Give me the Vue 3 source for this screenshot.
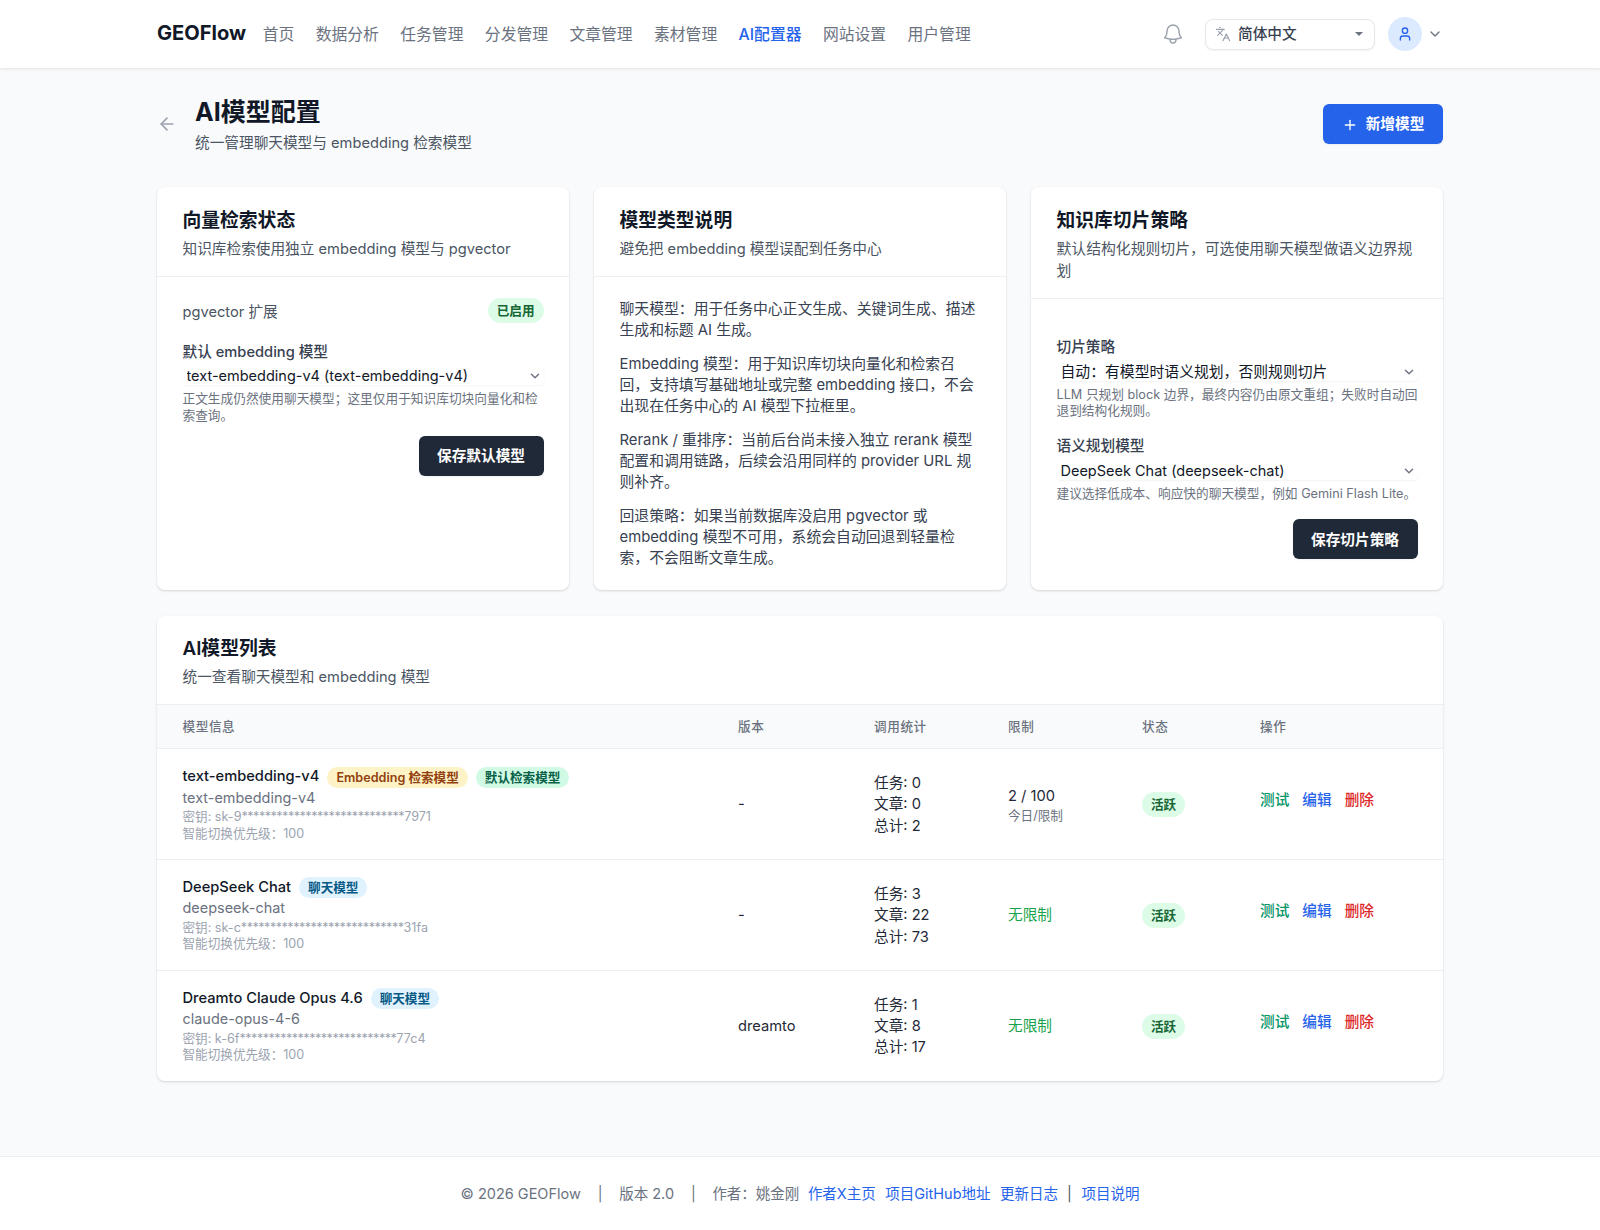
<script setup>
const navItems = ['首页', '数据分析', '任务管理', '分发管理', '文章管理', '素材管理', 'AI配置器', '网站设置', '用户管理']

const typeNotes = [
  '聊天模型：用于任务中心正文生成、关键词生成、描述生成和标题 AI 生成。',
  'Embedding 模型：用于知识库切块向量化和检索召回，支持填写基础地址或完整 embedding 接口，不会出现在任务中心的 AI 模型下拉框里。',
  'Rerank / 重排序：当前后台尚未接入独立 rerank 模型配置和调用链路，后续会沿用同样的 provider URL 规则补齐。',
  '回退策略：如果当前数据库没启用 pgvector 或 embedding 模型不可用，系统会自动回退到轻量检索，不会阻断文章生成。'
]

const models = [
  {
    name: 'text-embedding-v4',
    tags: [
      { text: 'Embedding 检索模型', kind: 'amber' },
      { text: '默认检索模型', kind: 'mint' }
    ],
    modelId: 'text-embedding-v4',
    key: ['sk-9', 28, '7971'],
    version: '-',
    stats: [0, 0, 2],
    limit: '2 / 100'
  },
  {
    name: 'DeepSeek Chat',
    tags: [{ text: '聊天模型', kind: 'sky' }],
    modelId: 'deepseek-chat',
    key: ['sk-c', 28, '31fa'],
    version: '-',
    stats: [3, 22, 73],
    limit: null
  },
  {
    name: 'Dreamto Claude Opus 4.6',
    tags: [{ text: '聊天模型', kind: 'sky' }],
    modelId: 'claude-opus-4-6',
    key: ['k-6f', 27, '77c4'],
    version: 'dreamto',
    stats: [1, 8, 17],
    limit: null
  }
]
</script>

<template>
  <div class="page">
    <header class="topbar">
      <div class="topbar-inner">
        <span class="logo">GEOFlow</span>
        <nav class="nav">
          <a v-for="item in navItems" :key="item" :class="{ active: item === 'AI配置器' }">{{ item }}</a>
        </nav>
        <div class="topbar-right">
          <svg class="bell" viewBox="0 0 24 24" fill="none" stroke="currentColor" stroke-width="1.5" stroke-linecap="round" stroke-linejoin="round">
            <path d="M14.857 17.082a23.848 23.848 0 0 0 5.454-1.31A8.967 8.967 0 0 1 18 9.75V9A6 6 0 0 0 6 9v.75a8.967 8.967 0 0 1-2.312 6.022c1.733.64 3.56 1.085 5.455 1.31m5.714 0a24.255 24.255 0 0 1-5.714 0m5.714 0a3 3 0 1 1-5.714 0" />
          </svg>
          <div class="lang">
            <svg class="lang-icon" viewBox="0 0 24 24" fill="none" stroke="currentColor" stroke-width="1.8" stroke-linecap="round" stroke-linejoin="round">
              <path d="m5 8 6 6" /><path d="m4 14 6-6 2-3" /><path d="M2 5h12" /><path d="M7 2h1" /><path d="m22 22-5-10-5 10" /><path d="M14 18h6" />
            </svg>
            <span class="lang-text">简体中文</span>
            <span class="caret"></span>
          </div>
          <div class="avatar">
            <svg viewBox="0 0 24 24" fill="none" stroke="currentColor" stroke-width="2" stroke-linecap="round" stroke-linejoin="round">
              <path d="M19 21v-2a4 4 0 0 0-4-4H9a4 4 0 0 0-4 4v2" /><circle cx="12" cy="7" r="4" />
            </svg>
          </div>
          <svg class="user-chevron" viewBox="0 0 24 24" fill="none" stroke="currentColor" stroke-width="2" stroke-linecap="round" stroke-linejoin="round">
            <path d="m6 9 6 6 6-6" />
          </svg>
        </div>
      </div>
    </header>

    <main class="main">
      <section class="page-head">
        <svg class="back" viewBox="0 0 24 24" fill="none" stroke="currentColor" stroke-width="2" stroke-linecap="round" stroke-linejoin="round">
          <path d="M19 12H5" /><path d="m12 19-7-7 7-7" />
        </svg>
        <div class="page-titles">
          <h1>AI模型配置</h1>
          <p>统一管理聊天模型与 embedding 检索模型</p>
        </div>
        <button class="btn-primary">
          <svg viewBox="0 0 24 24" fill="none" stroke="currentColor" stroke-width="2" stroke-linecap="round">
            <path d="M12 5v14" /><path d="M5 12h14" />
          </svg>
          新增模型
        </button>
      </section>

      <section class="cards">
        <div class="card">
          <div class="card-head">
            <h2>向量检索状态</h2>
            <p>知识库检索使用独立 embedding 模型与 pgvector</p>
          </div>
          <div class="card-body default-model">
            <div class="status-row">
              <span class="status-name">pgvector 扩展</span>
              <span class="badge-green">已启用</span>
            </div>
            <label class="field-label">默认 embedding 模型</label>
            <div class="select-wrap first-select">
              <select class="select latin">
                <option>text-embedding-v4 (text-embedding-v4)</option>
              </select>
              <svg viewBox="0 0 20 20" fill="none" stroke="#6b7280" stroke-width="1.5" stroke-linecap="round" stroke-linejoin="round"><path d="m6 8 4 4 4-4" /></svg>
            </div>
            <p class="help">正文生成仍然使用聊天模型；这里仅用于知识库切块向量化和检索查询。</p>
            <div class="actions">
              <button class="btn-dark">保存默认模型</button>
            </div>
          </div>
        </div>

        <div class="card">
          <div class="card-head">
            <h2>模型类型说明</h2>
            <p>避免把 embedding 模型误配到任务中心</p>
          </div>
          <div class="card-body notes">
            <p v-for="note in typeNotes" :key="note">{{ note }}</p>
          </div>
        </div>

        <div class="card">
          <div class="card-head">
            <h2>知识库切片策略</h2>
            <p class="cjk">默认结构化规则切片，可选使用聊天模型做语义边界规划</p>
          </div>
          <div class="card-body strategy">
            <label class="field-label">切片策略</label>
            <div class="select-wrap">
              <select class="select cjk">
                <option>自动：有模型时语义规划，否则规则切片</option>
              </select>
              <svg viewBox="0 0 20 20" fill="none" stroke="#6b7280" stroke-width="1.5" stroke-linecap="round" stroke-linejoin="round"><path d="m6 8 4 4 4-4" /></svg>
            </div>
            <p class="help">LLM 只规划 block 边界，最终内容仍由原文重组；失败时自动回退到结构化规则。</p>
            <label class="field-label second">语义规划模型</label>
            <div class="select-wrap">
              <select class="select latin">
                <option>DeepSeek Chat (deepseek-chat)</option>
              </select>
              <svg viewBox="0 0 20 20" fill="none" stroke="#6b7280" stroke-width="1.5" stroke-linecap="round" stroke-linejoin="round"><path d="m6 8 4 4 4-4" /></svg>
            </div>
            <p class="help">建议选择低成本、响应快的聊天模型，例如 Gemini Flash Lite。</p>
            <div class="actions">
              <button class="btn-dark">保存切片策略</button>
            </div>
          </div>
        </div>
      </section>

      <section class="card list-card">
        <div class="list-head">
          <h2>AI模型列表</h2>
          <p>统一查看聊天模型和 embedding 模型</p>
        </div>
        <table class="table">
          <colgroup>
            <col class="col-info" /><col class="col-version" /><col class="col-stats" />
            <col class="col-limit" /><col class="col-status" /><col />
          </colgroup>
          <thead>
            <tr>
              <th>模型信息</th><th>版本</th><th>调用统计</th><th>限制</th><th>状态</th><th>操作</th>
            </tr>
          </thead>
          <tbody>
            <tr v-for="m in models" :key="m.name">
              <td class="cell-info">
                <div class="model-name">
                  <span>{{ m.name }}</span>
                  <span v-for="t in m.tags" :key="t.text" class="tag" :class="t.kind">{{ t.text }}</span>
                </div>
                <div class="model-id">{{ m.modelId }}</div>
                <div class="model-meta key">密钥: {{ m.key[0] }}<span class="stars">{{ '*'.repeat(m.key[1]) }}</span>{{ m.key[2] }}</div>
                <div class="model-meta">智能切换优先级：100</div>
              </td>
              <td class="cell-text">{{ m.version }}</td>
              <td class="cell-text">
                <div>任务: {{ m.stats[0] }}</div>
                <div>文章: {{ m.stats[1] }}</div>
                <div>总计: {{ m.stats[2] }}</div>
              </td>
              <td class="cell-text">
                <template v-if="m.limit">
                  <div>{{ m.limit }}</div>
                  <div class="limit-sub">今日/限制</div>
                </template>
                <span v-else class="unlimited">无限制</span>
              </td>
              <td><span class="badge-green status-badge">活跃</span></td>
              <td>
                <div class="ops">
                  <a class="op-test">测试</a>
                  <a class="op-edit">编辑</a>
                  <a class="op-del">删除</a>
                </div>
              </td>
            </tr>
          </tbody>
        </table>
      </section>
    </main>

    <footer class="footer">
      <span>© 2026 GEOFlow</span>
      <span class="sep">|</span>
      <span>版本 2.0</span>
      <span class="sep">|</span>
      <span>作者：姚金刚</span>
      <a class="first-link">作者X主页</a>
      <a>项目GitHub地址</a>
      <a>更新日志</a>
      <span class="sep-tight">|</span>
      <a>项目说明</a>
    </footer>
  </div>
</template>

<style>
html,
body {
  margin: 0;
  background: #f9fafb;
}
</style>

<style scoped>
.page {
  min-height: 1230px;
  display: flex;
  flex-direction: column;
  font-family: Inter, "Noto Sans CJK SC", sans-serif;
  font-size: 14.66px;
  line-height: 21.4px;
  color: #1f2937;
  background: #f9fafb;
}

h1,
h2,
p {
  margin: 0;
}

.topbar {
  height: 68px;
  background: #fff;
  box-shadow: 0 1px 3px rgba(0, 0, 0, 0.1);
  position: relative;
}

.topbar-inner {
  height: 100%;
  margin: 0 157px;
  display: flex;
  align-items: center;
}

.logo {
  font-size: 20.1px;
  font-weight: 700;
  color: #111827;
}

.nav {
  display: flex;
  gap: 21.4px;
  margin-left: 16.5px;
  padding-top: 1px;
  font-size: 15.8px;
  color: #6b7280;
}

.nav .active {
  color: #2563eb;
  font-weight: 500;
}

.topbar-right {
  margin-left: auto;
  display: flex;
  align-items: center;
}

.bell {
  width: 24px;
  height: 24px;
  color: #9ca3af;
  margin-right: 20px;
}

.lang {
  width: 170px;
  height: 31px;
  box-sizing: border-box;
  border: 1px solid #e5e7eb;
  border-radius: 8px;
  box-shadow: 0 1px 2px rgba(0, 0, 0, 0.05);
  display: flex;
  align-items: center;
  padding: 0 11px 0 9px;
  background: #fff;
}

.lang-icon {
  width: 16px;
  height: 16px;
  color: #9ca3af;
}

.lang-text {
  margin-left: 7px;
  padding-top: 1px;
  font-weight: 500;
  color: #374151;
}

.caret {
  margin-left: auto;
  width: 0;
  height: 0;
  border-left: 4px solid transparent;
  border-right: 4px solid transparent;
  border-top: 4px solid #6b7280;
}

.avatar {
  width: 34px;
  height: 34px;
  margin-left: 13px;
  border-radius: 50%;
  background: #dbeafe;
  color: #2563eb;
  display: flex;
  align-items: center;
  justify-content: center;
}

.avatar svg {
  width: 16px;
  height: 16px;
}

.user-chevron {
  width: 16px;
  height: 16px;
  margin-left: 5px;
  color: #6b7280;
}

.main {
  flex: 1;
  margin: 0 157px;
  padding-top: 26px;
}

.page-head {
  display: flex;
  align-items: center;
  height: 64px;
}

.back {
  width: 20px;
  height: 20px;
  color: #9ca3af;
  margin-bottom: 5px;
}

.page-titles {
  margin-left: 18px;
}

.page-titles h1 {
  font-size: 25px;
  line-height: 32px;
  font-weight: 700;
  color: #111827;
  margin-top: -1px;
}

.page-titles p {
  color: #4b5563;
  margin-top: 5px;
}

.btn-primary {
  margin-left: auto;
  width: 120px;
  height: 40px;
  padding: 1px 0 0;
  border: 0;
  border-radius: 6px;
  background: #2563eb;
  color: #fff;
  font: inherit;
  font-weight: 600;
  display: flex;
  align-items: center;
  justify-content: center;
  gap: 8px;
  margin-bottom: 4px;
  box-shadow: 0 1px 2px rgba(0, 0, 0, 0.05);
}

.btn-primary svg {
  width: 16px;
  height: 16px;
}

.cards {
  display: grid;
  grid-template-columns: repeat(3, 1fr);
  gap: 25px;
  margin-top: 29px;
}

.card {
  background: #fff;
  border-radius: 8px;
  box-shadow: 0 1px 3px rgba(0, 0, 0, 0.1), 0 1px 2px rgba(0, 0, 0, 0.06);
}

.card-head {
  padding: 20.5px 25.5px 15.6px;
  border-bottom: 1px solid #eceef1;
}

.card-head h2,
.list-head h2 {
  font-size: 18.8px;
  line-height: 26px;
  font-weight: 600;
  color: #111827;
}

.card-head p,
.list-head p {
  color: #4b5563;
  margin-top: 5.5px;
}

.card-head p.cjk {
  font-size: 14.83px;
  line-height: 21.8px;
}

.card-body {
  padding: 22px 25.5px 20.5px;
}

.status-row {
  display: flex;
  justify-content: space-between;
  align-items: center;
  margin-top: -1px;
  color: #4b5563;
}

.status-name {
  padding-top: 4px;
}

.badge-green {
  display: inline-block;
  padding: 0 9px;
  height: 25px;
  line-height: 25px;
  border-radius: 13px;
  background: #dcfce7;
  color: #166534;
  font-size: 12.6px;
  font-weight: 600;
}

.status-badge {
  vertical-align: 2px;
}

.field-label {
  display: block;
  color: #374151;
  font-weight: 500;
  margin-top: 19px;
}

.select-wrap {
  position: relative;
  margin-top: 4px;
  height: 18px;
  border-radius: 4px;
  box-shadow: 0 1px 2px rgba(0, 0, 0, 0.05);
}

.select-wrap.first-select {
  margin-top: 3px;
}

.select {
  appearance: none;
  width: 100%;
  height: 18px;
  border: 0;
  padding: 0 0 0 4px;
  background: transparent;
  font: inherit;
  line-height: 18px;
  color: #111827;
  display: block;
  outline: none;
}

.select.latin {
  font-size: 14.5px;
}

.select.cjk {
  font-size: 14.83px;
}

.select-wrap svg {
  position: absolute;
  right: 0;
  top: 0;
  width: 18px;
  height: 18px;
  pointer-events: none;
}

.help {
  font-size: 12.7px;
  line-height: 16.4px;
  color: #6b7280;
  margin-top: 5.5px;
}

.default-model .help {
  margin-top: 6.5px;
}

.actions {
  display: flex;
  justify-content: flex-end;
  margin-top: 11.5px;
}

.strategy .actions {
  margin-top: 17px;
}

.btn-dark {
  width: 125px;
  height: 40px;
  padding: 2px 0 0;
  border: 0;
  border-radius: 6px;
  background: #1f2937;
  color: #fff;
  font: inherit;
  font-weight: 600;
  box-shadow: 0 1px 2px rgba(0, 0, 0, 0.05);
}

.notes {
  padding-right: 29.5px;
  font-size: 14.83px;
}

.notes p {
  color: #374151;
}

.notes p + p {
  margin-top: 11.8px;
}

.strategy {
  padding-top: 37.5px;
}

.strategy .field-label {
  margin-top: 0;
}

.strategy .select-wrap {
  margin-top: 5px;
}

.strategy .field-label.second {
  margin-top: 17px;
}

.strategy .second + .select-wrap {
  margin-top: 4.5px;
}

.list-card {
  margin-top: 26px;
}

.list-head {
  padding: 20px 25.5px 15.5px;
  border-bottom: 1px solid #eceef1;
}

.list-head p {
  margin-top: 5px;
}

.table {
  width: 100%;
  border-collapse: collapse;
  table-layout: fixed;
}

.col-info {
  width: 555.5px;
}

.col-version {
  width: 136px;
}

.col-stats {
  width: 134px;
}

.col-limit {
  width: 134px;
}

.col-status {
  width: 118px;
}

.table th {
  height: 43px;
  padding: 0 25.5px;
  background: #f9fafb;
  border-bottom: 1px solid #eceef1;
  text-align: left;
  font-size: 12.6px;
  font-weight: 500;
  letter-spacing: 0.6px;
  color: #6b7280;
}

.table td {
  height: 110.7px;
  padding: 2px 25.5px 0;
  border-bottom: 1px solid #eceef1;
  box-sizing: border-box;
}

.table td.cell-info {
  padding-top: 0;
}

.table tr:last-child td {
  border-bottom: 0;
}

.cell-text {
  color: #1f2937;
}

.model-name {
  display: flex;
  align-items: center;
  gap: 8px;
  color: #111827;
  font-weight: 500;
}

.tag {
  height: 21px;
  line-height: 21px;
  padding: 0 9px;
  border-radius: 11px;
  font-size: 12.6px;
  font-weight: 600;
}

.tag.amber {
  background: #fef3c7;
  color: #92400e;
}

.tag.mint {
  background: #d1fae5;
  color: #065f46;
}

.tag.sky {
  background: #e0f2fe;
  color: #075985;
}

.model-id {
  margin-top: -1px;
  font-size: 14.45px;
  color: #6b7280;
}

.model-meta {
  font-size: 12.6px;
  line-height: 16.4px;
  color: #9ca3af;
}

.model-meta.key {
  margin-top: 1px;
}

.stars {
  letter-spacing: -0.5px;
}

.limit-sub {
  font-size: 12.6px;
  line-height: 16.4px;
  color: #6b7280;
}

.unlimited {
  color: #16a34a;
}

.ops {
  display: flex;
  gap: 13px;
  font-weight: 500;
  margin-top: -9px;
}

.op-test {
  color: #059669;
}

.op-edit {
  color: #2563eb;
}

.op-del {
  color: #dc2626;
}

.footer {
  height: 74px;
  box-sizing: border-box;
  padding-top: 1px;
  background: #fff;
  border-top: 1px solid #eceef1;
  display: flex;
  align-items: center;
  justify-content: center;
  font-size: 14.5px;
  color: #6b7280;
}

.footer a {
  color: #2563eb;
  margin-left: 9.5px;
}

.footer a.first-link {
  margin-left: 8.5px;
}

.sep {
  margin: 0 16.5px 0 17px;
  color: #6b7280;
}

.sep-tight {
  margin-left: 9px;
  color: #4b5563;
}
</style>
